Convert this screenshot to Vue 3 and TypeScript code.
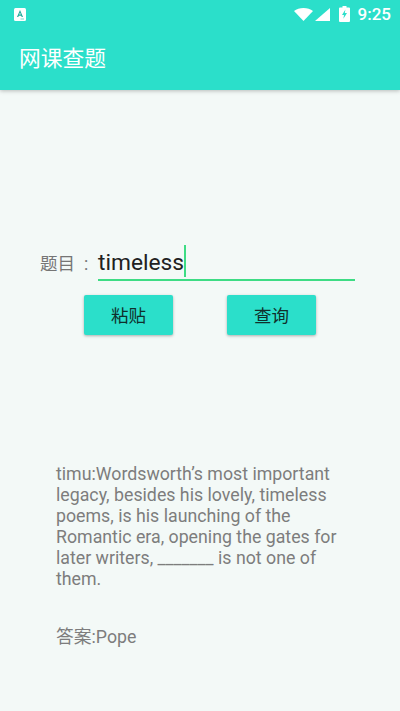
<script setup lang="ts">
const question =
  "timu:Wordsworth’s most important legacy, besides his lovely, timeless poems, is his launching of the Romantic era, opening the gates for later writers, _______ is not one of them.";
const answer = "答案:Pope";
</script>

<template>
  <div class="screen">
    <header class="appbar">
      <div class="statusbar">
        <svg class="notif" viewBox="0 0 12 13" width="12" height="13">
          <rect width="12" height="13" rx="1.500" fill="#fff" />
          <path d="M6 2 9 9H7.700L7.200 7.700H4.800L4.300 9H3ZM5.200 6.600h1.600L6 4.500Z" fill="#1fa99a" />
          <rect x="6.500" y="10.500" width="3.500" height="1" fill="#7fd8cd" />
        </svg>
        <div class="status-right">
          <svg class="wifi" viewBox="0 0 19 13" width="19" height="13">
            <path d="M9.500 13 0 3C2.500 1.100 5.800 0 9.500 0s7 1.100 9.500 3Z" fill="#fff" />
          </svg>
          <svg class="signal" viewBox="0 0 15 13" width="15" height="13">
            <path d="M0 13 15 0V13Z" fill="#fff" />
          </svg>
          <svg class="battery" viewBox="0 0 11 16" width="11" height="16">
            <path
              d="M3.500 0h4v1.500H10a1 1 0 0 1 1 1V15a1 1 0 0 1-1 1H1a1 1 0 0 1-1-1V2.500a1 1 0 0 1 1-1h2.500Z"
              fill="#fff"
            />
            <path d="M6.400 3.500 3 9h2l-.6 3.800L8 7H5.800Z" fill="#2bdfca" />
          </svg>
          <span class="clock">9:25</span>
        </div>
      </div>
      <div class="title">网课查题</div>
    </header>

    <main class="body">
      <div class="search-row">
        <span class="label">题目<span class="colon">:</span></span>
        <div class="input">
          <span class="input-text">timeless</span><span class="caret"></span>
        </div>
      </div>
      <div class="actions">
        <button class="btn" type="button">粘贴</button>
        <button class="btn" type="button">查询</button>
      </div>
      <p class="question">{{ question }}</p>
      <p class="answer">{{ answer }}</p>
    </main>
  </div>
</template>

<style>
html,
body {
  margin: 0;
  background: #f3f9f7;
}
</style>

<style scoped>
.screen {
  width: 400px;
  height: 711px;
  overflow: hidden;
  background: #f3f9f7;
  font-family: Roboto, "Noto Sans CJK SC", sans-serif;
}

.appbar {
  height: 90px;
  background: #2bdfca;
  box-shadow: 0 1px 4px rgba(0, 0, 0, 0.25);
  color: #fff;
}

.statusbar {
  height: 28px;
  box-sizing: border-box;
  padding: 0 9px 0 14px;
  display: flex;
  align-items: center;
  justify-content: space-between;
}

.status-right {
  display: flex;
  align-items: center;
}

.signal {
  margin-left: 2px;
}

.battery {
  margin-left: 9px;
}

.clock {
  font-size: 17px;
  font-weight: 500;
  margin-left: 8px;
}

.title {
  padding: 0 0 0 19px;
  font-size: 21.750px;
  line-height: 62px;
}

.body {
  display: flex;
  flex-direction: column;
}

.search-row {
  margin-top: 153px;
  padding: 0 45px 0 40px;
  display: flex;
  align-items: flex-end;
}

.label {
  width: 58px;
  flex: none;
  font-size: 17.500px;
  line-height: 24px;
  margin-bottom: 5px;
  color: #757575;
  white-space: nowrap;
}

.colon {
  margin-left: 9px;
}

.input {
  flex: 1;
  height: 36px;
  border-bottom: 2px solid #3ddc84;
  display: flex;
  align-items: center;
}

.input-text {
  font-size: 22.750px;
  color: #212121;
  padding-top: 2px;
}

.caret {
  width: 1.500px;
  height: 32px;
  background: #3ddc84;
}

.actions {
  margin-top: 14px;
  padding-left: 84px;
  display: flex;
  gap: 54px;
}

.btn {
  width: 89px;
  height: 40px;
  padding: 0 0 2px;
  border: none;
  border-radius: 2px;
  background: #2bdfca;
  box-shadow: 0 1px 3px rgba(0, 0, 0, 0.3);
  font-family: inherit;
  font-size: 17.500px;
  color: #10302c;
}

.question {
  margin: 129px 0 0;
  padding: 0 56px;
  font-size: 17.750px;
  line-height: 21.100px;
  color: #7d7d7d;
}

.answer {
  margin: 36.500px 0 0;
  padding: 0 56px;
  font-size: 17.750px;
  line-height: 21.100px;
  color: #7d7d7d;
}
</style>
